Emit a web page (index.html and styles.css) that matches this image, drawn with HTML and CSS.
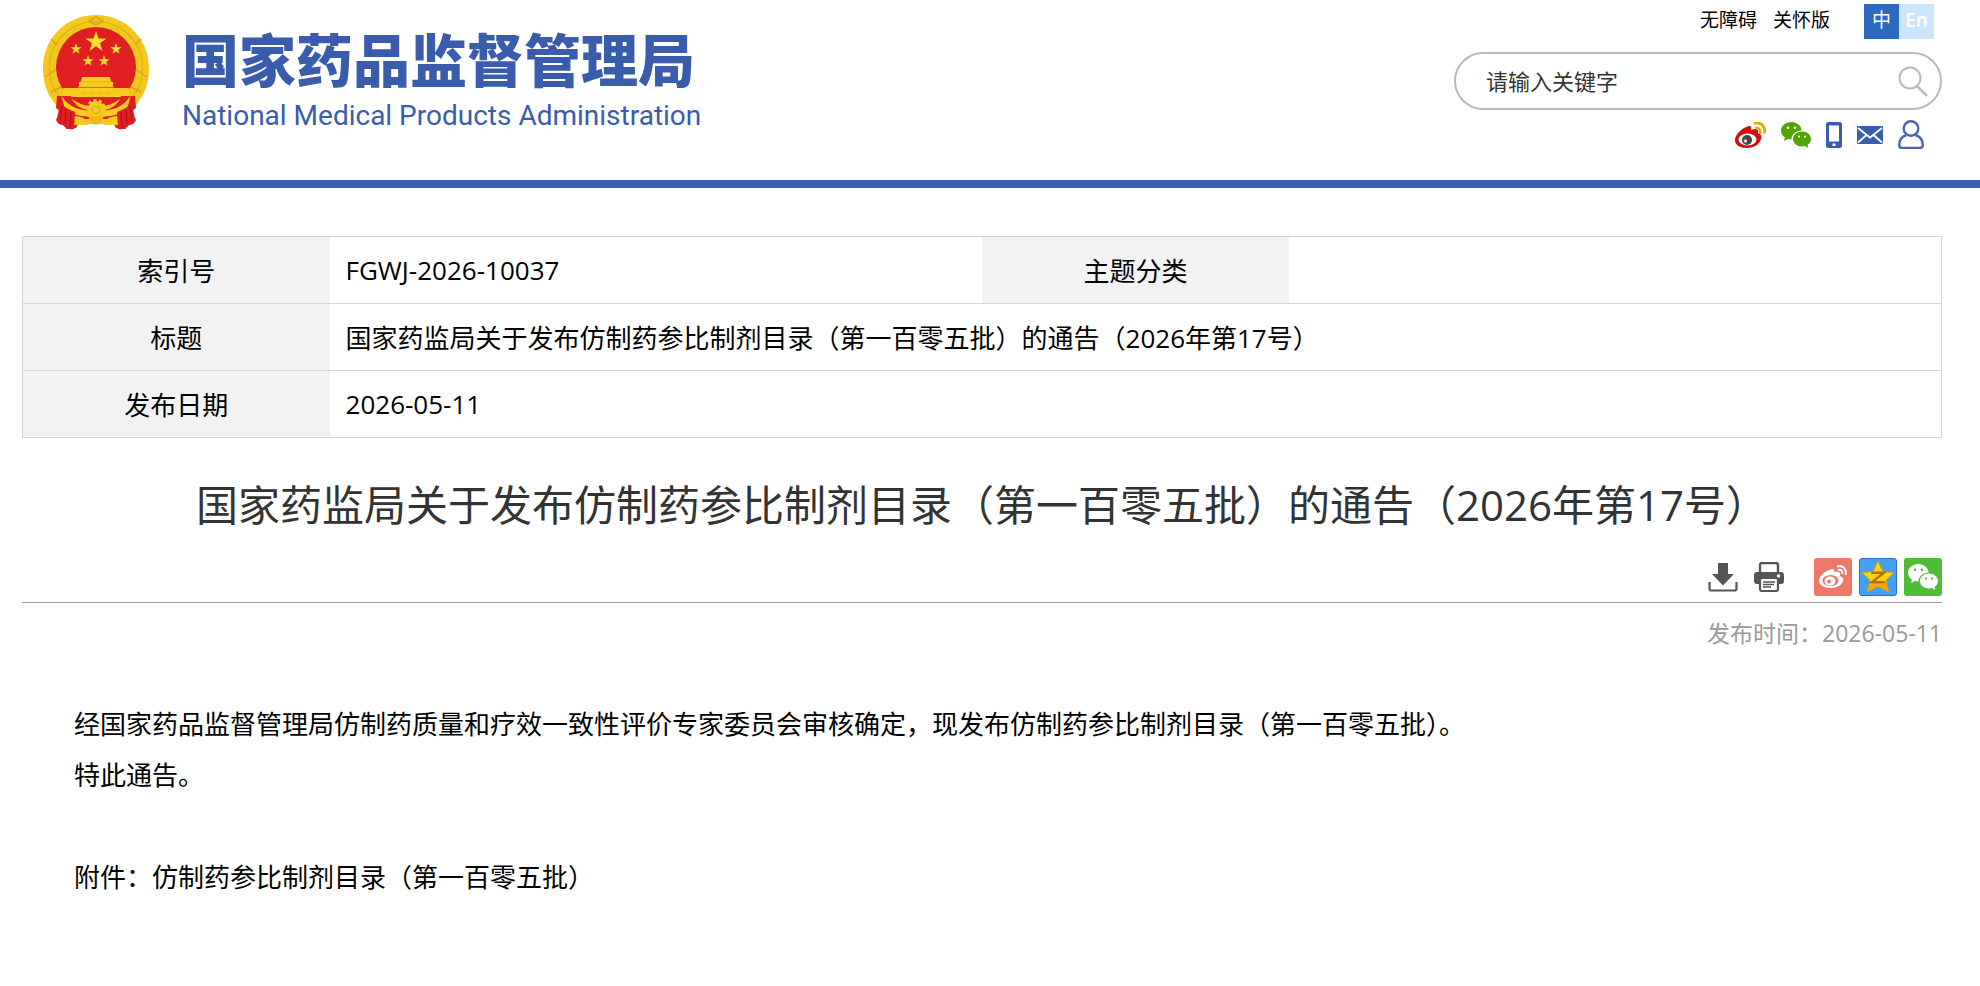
FILE: index.html
```html
<!DOCTYPE html>
<html lang="zh-CN">
<head>
    <meta charset="UTF-8">
    <title>国家药监局关于发布仿制药参比制剂目录（第一百零五批）的通告（2026年第17号）</title>
    <link rel="stylesheet" href="styles.css">
</head>
<body>
<svg class="sprite">
    <symbol id="star" viewBox="-10 -10 20 20">
        <polygon points="0,-10 2.3,-3.1 9.5,-3.1 3.7,1.2 5.9,8.1 0,3.9 -5.9,8.1 -3.7,1.2 -9.5,-3.1 -2.3,-3.1"/>
    </symbol>
    <symbol id="wechat" viewBox="0 0 30 26">
        <path d="M10.500 0C4.700 0 0 3.900 0 8.800c0 2.800 1.500 5.200 3.900 6.800L3 19l4-2.100c1.100.3 2.200.5 3.400.5.3-5.300 4.700-9 10.300-9C20.200 3.700 15.800 0 10.500 0zM7 4.500a1.300 1.300 0 1 1 0 2.600 1.300 1.300 0 0 1 0-2.600zm7 0a1.300 1.300 0 1 1 0 2.600 1.300 1.300 0 0 1 0-2.600z"/>
        <path d="M21 9.500c-5 0-9 3.300-9 7.500s4 7.500 9 7.500c1 0 2-.1 2.900-.4L27.300 26l-.8-3c2.100-1.400 3.500-3.500 3.500-6 0-4.200-4-7.500-9-7.500zm-3 4a1.100 1.100 0 1 1 0 2.200 1.100 1.100 0 0 1 0-2.200zm6 0a1.100 1.100 0 1 1 0 2.200 1.100 1.100 0 0 1 0-2.200z"/>
    </symbol>
</svg>
<header class="header">
    <a class="logo" href="#">
        <svg class="emblem" viewBox="0 0 106 115">
            <path d="M53 0C82 0 106 23 106 53c0 18-6 30-16 40l-8 16H24l-8-16C6 83 0 71 0 53 0 23 24 0 53 0z" fill="#f3c81c"/>
            <circle cx="53" cy="53" r="46.500" fill="none" stroke="#e3b41c" stroke-width="1.500"/>
            <path d="M8 24l6 6M98 24l-6 6M2 62l13-9M104 62l-13-9M8 77l12-6M98 77l-12-6M46 6l7-4 7 4-7 4z" fill="none" stroke="#d9a51b" stroke-width="1.500"/>
            <circle cx="53" cy="52" r="40" fill="#e01f22"/>
            <g fill="#f9dc2e">
                <use href="#star" x="42" y="16" width="22" height="22"/>
                <use href="#star" x="27" y="28" width="12" height="12"/>
                <use href="#star" x="67" y="28" width="12" height="12"/>
                <use href="#star" x="39" y="40" width="12" height="12"/>
                <use href="#star" x="55" y="40" width="12" height="12"/>
            </g>
            <path d="M39 62h28l1 5h2v5H36v-5h2zM20 73h66v9H20z" fill="#f6cc20"/>
            <path d="M37 67h32M35 72h36M38 78h5m3 0h5m3 0h5m3 0h5" stroke="#e3b41c" fill="none"/>
            <path d="M14 81l14 0c2 9 12 15 25 15s23-6 25-15h14l1 12-11 8 1 13-10-1-5-9H38l-5 9-10 1 1-13-11-8z" fill="#e01f22"/>
            <path d="M18 80c8 13 19 16 35 16s27-3 35-16l-4 14c-7 6-17 8-31 8s-24-2-31-8z" fill="#f6cc20"/>
            <circle cx="53" cy="94" r="8" fill="#f6cc20" stroke="#f6cc20" stroke-width="4" stroke-dasharray="3 2"/>
            <circle cx="53" cy="95" r="4" fill="none" stroke="#d9a51b"/>
            <path d="M31 101c5 0 9 1 12 4l2 5H31zM75 101c-5 0-9 1-12 4l-2 5h14z" fill="#f6cc20"/>
            <path d="M45 101h16l-3 7-5 2-5-2z" fill="#f3b81c"/>
            <path d="M16 84c2 6 8 10 16 13l-1 17c-5 1-8 0-11-4-3 0-6-2-7-5 3-6 3-13 3-21zM90 84c-2 6-8 10-16 13l1 17c5 1 8 0 11-4 3 0 6-2 7-5-3-6-3-13-3-21z" fill="#df1e22"/>
            <path d="M19 91l-2 15M23 94l-1 15M28 97l-1 16M87 91l2 15M83 94l1 15M78 97l1 16" stroke="#a81220" fill="none"/>
        </svg>
        <span class="logo-text">
            <strong class="logo-cn">国家药品监督管理局</strong>
            <span class="logo-en">National Medical Products Administration</span>
        </span>
    </a>
    <div class="header-right">
        <div class="top-links">
            <a href="#">无障碍</a>
            <a href="#">关怀版</a>
            <div class="lang">
                <a class="lang-cn" href="#">中</a>
                <a class="lang-en" href="#">En</a>
            </div>
        </div>
        <form class="search">
            <input class="search-input" type="text" placeholder="请输入关键字" aria-label="请输入关键字">
            <button class="search-btn" type="button" aria-label="搜索">
                <svg width="30" height="31" viewBox="0 0 30 31" fill="none" stroke="#b9b9b9" stroke-width="2">
                    <circle cx="12" cy="12" r="10.500"/>
                    <path d="M19 20l10 10" stroke-width="2.500"/>
                </svg>
            </button>
        </form>
        <div class="social">
            <a href="#" aria-label="微博">
                <svg width="31" height="26" viewBox="0 0 31 26">
                    <path d="M11 5c4-2 6-1 5 3 5-2 8-1 7 3 3 1 4 3 3 6-1 5-7 9-14 9C5 26 0 23 0 18 0 13 6 7 11 5z" fill="#d80a0a"/>
                    <ellipse cx="12.500" cy="17.500" rx="9" ry="6" fill="#fff"/>
                    <circle cx="12" cy="18" r="5" fill="#444"/>
                    <circle cx="10.500" cy="19" r="1.700" fill="#ddd"/>
                    <path d="M20 6c4-1 6 2 5 6M19 1.500c7-2 12 3 10.500 10" fill="none" stroke="#e3ab12" stroke-width="2.800"/>
                </svg>
            </a>
            <a href="#" aria-label="微信">
                <svg width="30" height="26" fill="#52a600"><use href="#wechat"/></svg>
            </a>
            <a href="#" aria-label="手机版">
                <svg width="16" height="26" viewBox="0 0 16 26">
                    <rect width="16" height="26" rx="2.500" fill="#395cac"/>
                    <path d="M3 3.500h10v16H3zM6.500 21.500h3v2.500h-3z" fill="#fff"/>
                </svg>
            </a>
            <a href="#" aria-label="邮箱">
                <svg width="26" height="18" viewBox="0 0 26 18">
                    <rect width="26" height="18" rx="1" fill="#395cac"/>
                    <path d="M1 2l12 9.500L25 2M1 16.500l8.500-7.500M25 16.500L16.500 9" fill="none" stroke="#fff" stroke-width="1.800"/>
                </svg>
            </a>
            <a class="social-user" href="#" aria-label="用户">
                <svg width="26" height="29" viewBox="0 0 26 29" fill="none" stroke="#4c66b1" stroke-width="2.400">
                    <circle cx="13" cy="8.500" r="7.300"/>
                    <path d="M8.500 15C4 16.500 1.200 20 1.200 25c0 2 1 3 3 3h17.600c2 0 3-1 3-3 0-5-2.800-8.500-7.300-10"/>
                </svg>
            </a>
        </div>
    </div>
</header>
<main class="main">
    <table class="info">
        <tr>
            <th>索引号</th>
            <td>FGWJ-2026-10037</td>
            <th>主题分类</th>
            <td></td>
        </tr>
        <tr>
            <th>标题</th>
            <td colspan="3">国家药监局关于发布仿制药参比制剂目录（第一百零五批）的通告（2026年第17号）</td>
        </tr>
        <tr>
            <th>发布日期</th>
            <td colspan="3">2026-05-11</td>
        </tr>
    </table>
    <h1 class="title">国家药监局关于发布仿制药参比制剂目录（第一百零五批）的通告（2026年第17号）</h1>
    <div class="tools">
        <button class="tool" type="button" aria-label="下载">
            <svg width="30" height="30" viewBox="0 0 30 30">
                <path d="M10 1h10v11h6L15 23.500 4 12h6z" fill="#555"/>
                <path d="M1.500 20v6.500q0 2 2 2h23q2 0 2-2V20" fill="none" stroke="#555" stroke-width="2.200"/>
            </svg>
        </button>
        <button class="tool" type="button" aria-label="打印">
            <svg width="30" height="30" viewBox="0 0 30 30">
                <path d="M6 11V3q0-2 2-2h14q2 0 2 2v8" fill="none" stroke="#555" stroke-width="2.400"/>
                <path d="M3 10h24q3 0 3 3v6q0 3-3 3H3q-3 0-3-3v-6q0-3 3-3z" fill="#555"/>
                <circle cx="24.500" cy="14" r="1.800" fill="#fff"/>
                <rect x="6" y="16" width="18" height="13" rx="2" fill="#fff" stroke="#555" stroke-width="2.200"/>
                <path d="M9 20h12M9 22.500h11M9 25h8" stroke="#555" stroke-width="1.400"/>
            </svg>
        </button>
        <div class="share">
            <a class="share-item share-weibo" href="#" aria-label="分享到微博">
                <svg width="28" height="24" viewBox="0 0 28 24">
                    <path d="M10 5c4-2 6-1 5 2 5-1 7 0 6 4 3 1 4 3 3 5-1 4-6 7-12 7C5 23 0 20 0 16 0 11 5 7 10 5z" fill="#fff"/>
                    <ellipse cx="11.500" cy="15.500" rx="8" ry="5.500" fill="#ee7768"/>
                    <ellipse cx="11" cy="16" rx="5.500" ry="4.500" fill="#fff"/>
                    <circle cx="10" cy="16.500" r="2" fill="#ee7768"/>
                    <path d="M19 5c3-1 5 1 4 4M18 1.500c6-2 10 3 8.500 8.500" fill="none" stroke="#fff" stroke-width="2"/>
                </svg>
            </a>
            <a class="share-item share-qzone" href="#" aria-label="分享到QQ空间">
                <svg width="34" height="34" viewBox="-10 -10 20 20">
                    <polygon points="0,-9.500 2.800,-3.300 9.500,-2.700 4.700,2 6.300,8.800 0,5.500 -6.300,8.800 -4.700,2 -9.500,-2.700 -2.800,-3.300" fill="#fbd40b" stroke="#c99505" stroke-width=".5"/>
                    <path d="M4.700 2l1.600 6.800L0 5.500l-6.300 3.300L-5 4z" fill="#f0a60c"/>
                    <path d="M-4-2.500h7.500L-3.500 3H4" fill="none" stroke="#b86c05" stroke-width="1.400"/>
                </svg>
            </a>
            <a class="share-item share-wechat" href="#" aria-label="分享到微信">
                <svg width="30" height="26" fill="#fff"><use href="#wechat"/></svg>
            </a>
        </div>
    </div>
    <div class="pub-time">发布时间：2026-05-11</div>
    <div class="content">
        <p>经国家药品监督管理局仿制药质量和疗效一致性评价专家委员会审核确定，现发布仿制药参比制剂目录（第一百零五批）。</p>
        <p>特此通告。</p>
        <p class="attach">附件：<a href="#">仿制药参比制剂目录（第一百零五批）</a></p>
    </div>
</main>
</body>
</html>
```
FILE: styles.css
```css
*{
    margin: 0;
    padding: 0;
    box-sizing: border-box;
}
body{
    background-color: #fff;
    color: #000;
    font-family: "Open Sans", "Noto Sans CJK SC", sans-serif;
    font-size: 26px;
}
a{
    color: inherit;
    text-decoration: none;
}
button{
    border: none;
    background: none;
    cursor: pointer;
}
svg{
    display: block;
}
.sprite{
    display: none;
}
/*头部*/
.header{
    display: flex;
    justify-content: space-between;
    align-items: flex-start;
    height: 188px;
    padding: 4px 38px 0 43px;
    border-bottom: 8px solid #395cac;
}
.logo{
    display: flex;
    gap: 33px;
    padding-top: 11px;
    color: #395cac;
}
.emblem{
    width: 106px;
    height: 115px;
}
.logo-text{
    display: flex;
    flex-direction: column;
    padding-top: 11px;
}
.logo-cn{
    font-size: 57px;
    font-weight: 900;
    line-height: 68px;
}
.logo-en{
    font-family: Roboto, sans-serif;
    font-size: 28px;
    line-height: 44px;
}
.header-right{
    width: 488px;
}
.top-links{
    display: flex;
    justify-content: flex-end;
    gap: 16px;
    padding-right: 8px;
    font-size: 19px;
    line-height: 33px;
}
.lang{
    display: flex;
    margin-left: 18px;
    color: #fff;
    text-align: center;
}
.lang a{
    width: 35px;
    height: 35px;
}
.lang-cn{
    background-color: #2b6abf;
}
.lang-en{
    background-color: #cce6ff;
    font-weight: 600;
}
.search{
    display: flex;
    align-items: center;
    height: 58px;
    margin-top: 13px;
    padding: 0 12px 0 30px;
    border: 2px solid #b9b9b9;
    border-radius: 29px;
}
.search-input{
    flex: 1;
    min-width: 0;
    border: none;
    outline: none;
    background: none;
    color: #333;
    font-family: inherit;
    font-size: 22px;
}
.search-input::placeholder{
    color: #333;
}
.social{
    display: flex;
    justify-content: flex-end;
    align-items: center;
    gap: 15px;
    padding: 10px 18px 0 0;
}
/*信息表格*/
.main{
    padding: 48px 38px 0 22px;
}
.info{
    width: 100%;
    table-layout: fixed;
    border: 1px solid #d6d6d6;
    border-collapse: collapse;
}
.info tr{
    height: 67px;
    border-bottom: 1px solid #d6d6d6;
}
.info th{
    width: 16%;
    background-color: #f2f2f2;
    font-weight: normal;
}
.info td{
    width: 34%;
    padding-left: 16px;
}
/*正文*/
.title{
    margin-top: 34px;
    color: #333;
    font-size: 42px;
    font-weight: normal;
    line-height: 66px;
    text-align: center;
}
.tools{
    display: flex;
    justify-content: flex-end;
    align-items: center;
    gap: 16px;
    margin-top: 20px;
    padding-bottom: 6px;
    border-bottom: 1px solid #999;
}
.share{
    display: flex;
    gap: 7px;
    margin-left: 14px;
}
.share-item{
    display: flex;
    justify-content: center;
    align-items: center;
    width: 38px;
    height: 38px;
    border-radius: 3px;
}
.share-weibo{
    background-color: #ee7768;
}
.share-qzone{
    border: 1px solid #2a6fd0;
    background-color: #45a0f5;
}
.share-wechat{
    background-color: #4fbe36;
}
.pub-time{
    color: #999;
    font-size: 23px;
    line-height: 60px;
    text-align: right;
}
.content{
    margin-top: 36px;
    line-height: 51px;
}
.content p{
    text-indent: 2em;
}
.content .attach{
    margin-top: 51px;
}
```
